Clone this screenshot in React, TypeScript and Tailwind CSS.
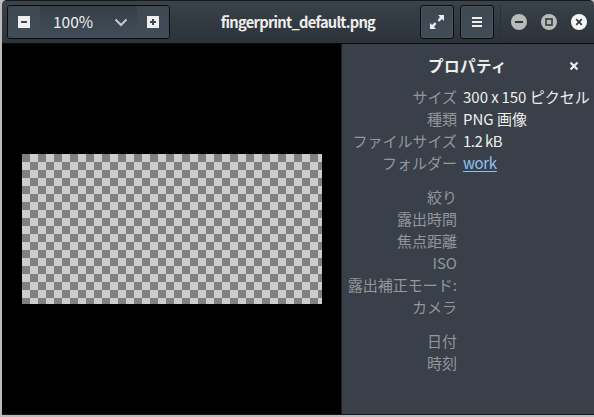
import React from "react";

type Row = { label: string; value?: React.ReactNode; gap?: boolean };

const rows: Row[] = [
  {
    label: "サイズ",
    value: (
      <>
        <span>300 </span>
        <span className="tracking-[-0.4px]">x </span>
        <span>150 ピクセル</span>
      </>
    ),
  },
  {
    label: "種類",
    value: <span>PNG 画像</span>,
  },
  { label: "ファイルサイズ", value: <span className="tracking-[-0.55px]">1.2 kB</span> },
  {
    label: "フォルダー",
    value: (
      <span className="tracking-[-0.35px] text-[#8fc0f4] underline decoration-1 underline-offset-2">
        work
      </span>
    ),
  },
  { label: "絞り", gap: true },
  { label: "露出時間" },
  { label: "焦点距離" },
  { label: "ISO" },
  { label: "露出補正モード:" },
  { label: "カメラ" },
  { label: "日付", gap: true },
  { label: "時刻" },
];

const raised =
  "flex h-[34px] items-center justify-center rounded-[3px] border border-[#0a0c0e] bg-linear-to-b from-[#3e4851] to-[#414c57] inset-shadow-[0_0_0_1px_#48535d]";

function Minus() {
  return (
    <svg width="12" height="12" viewBox="0 0 12 12" shapeRendering="crispEdges">
      <rect width="12" height="12" rx="1" fill="#eeeeec" />
      <rect x="3" y="5" width="6" height="2" fill="#3e4851" />
    </svg>
  );
}

function Plus() {
  return (
    <svg width="12" height="12" viewBox="0 0 12 12" shapeRendering="crispEdges">
      <rect width="12" height="12" rx="1" fill="#eeeeec" />
      <path d="M3 5h2V3h2v2h2v2H7v2H5V7H3z" fill="#3e4851" />
    </svg>
  );
}

function Header() {
  return (
    <header className="flex h-[44px] shrink-0 items-center rounded-tl-[5px] rounded-tr-[5px] border-t border-b border-t-[#15181b] border-b-[#07090a] bg-linear-to-b from-[#3a424a] to-[#2b3238] pl-[5px]">
      <div className="flex h-[34px] w-[163px] shrink-0 overflow-hidden rounded-[3px] border border-[#0a0c0e]">
        <div className="flex w-8 items-center justify-center bg-linear-to-b from-[#3e4851] to-[#414c57]">
          <Minus />
        </div>
        <div className="flex w-[97px] items-center bg-linear-to-b from-[#363f47] to-[#414d58] pl-[13px]">
          <span className="w-[53px] pb-[2px] text-[15.500px] leading-[22px] text-[#eeeeec]">100%</span>
          <svg className="ml-2" width="14" height="9" viewBox="0 0 14 9">
            <path d="M1.500 1.500 7 7l5.500-5.500" fill="none" stroke="#c6c8c9" strokeWidth="2" />
          </svg>
        </div>
        <div className="flex flex-1 items-center justify-center bg-linear-to-b from-[#3e4851] to-[#414c57]">
          <Plus />
        </div>
      </div>
      <h1 className="flex-1 pl-[6px] text-center text-[14.67px] leading-[22px] font-bold tracking-[-0.72px] whitespace-nowrap text-[#eeeeec]">
        fingerprint_default.png
      </h1>
      <div className="flex shrink-0 items-center">
        <div className={`${raised} w-[34px]`}>
          <svg width="14" height="14" viewBox="0 0 14 14" fill="#eeeeec">
            <path d="M8 0h6v6l-2-2-2.800 2.800-1.600-1.600L10 2zM0 8l2 2 2.800-2.800 1.600 1.600L4 12l2 2H0z" />
          </svg>
        </div>
        <div className={`${raised} ml-[6px] w-[34px]`}>
          <svg width="10" height="10" viewBox="0 0 10 10" fill="#eeeeec" shapeRendering="crispEdges">
            <path d="M0 0h10v2H0zM0 4h10v2H0zM0 8h10v2H0z" />
          </svg>
        </div>
        <div className="ml-[6px] h-[34px] w-px bg-[#2a3036]" />
        <div className="ml-[10px] flex gap-[14px] pr-[7px]">
          <svg width="16" height="16" viewBox="0 0 16 16">
            <circle cx="8" cy="8" r="8" fill="#b9bbbb" />
            <path d="M4 7h8v2H4z" fill="#30373e" />
          </svg>
          <svg width="16" height="16" viewBox="0 0 16 16">
            <circle cx="8" cy="8" r="8" fill="#b9bbbb" />
            <rect x="5" y="5" width="6" height="6" fill="none" stroke="#3b4147" strokeWidth="1.700" />
          </svg>
          <svg width="16" height="16" viewBox="0 0 16 16">
            <circle cx="8" cy="8" r="8" fill="#f5f5f5" />
            <path d="m5.200 5.200 5.600 5.600m0-5.600-5.600 5.600" stroke="#30373e" strokeWidth="1.700" />
          </svg>
        </div>
      </div>
    </header>
  );
}

export default function App() {
  return (
    <div className="flex h-[417px] w-[594px] flex-col overflow-hidden bg-[#bdbbbb] pb-[2px] pl-[2px] font-['Noto_Sans_CJK_JP','Noto_Sans',sans-serif]">
      <Header />
      <main className="flex min-h-0 flex-1 border-b border-[#14181b]">
        <section className="w-[340px] shrink-0 border-r border-[#1c2024] bg-black pt-[110px] pl-5">
          <div className="h-[150px] w-[300px] bg-[#cccccc] bg-[conic-gradient(#cccccc_25%,#808080_0_50%,#cccccc_0_75%,#808080_0)] bg-size-[16px_16px]" />
        </section>
        <aside className="min-w-0 flex-1 bg-[#394049]">
          <div className="flex h-[42px] items-center pt-px">
            <h2 className="w-[227px] pl-[86px] text-[15.500px] font-bold tracking-[0.5px] whitespace-nowrap text-[#eeeeec]">
              プロパティ
            </h2>
            <svg width="10" height="10" viewBox="0 0 10 10">
              <path d="m1.500 1.500 7 7m0-7-7 7" stroke="#eeeeec" strokeWidth="2.200" />
            </svg>
          </div>
          <dl className="text-[15px] leading-[22px] whitespace-nowrap">
            {rows.map((r) => (
              <div key={r.label} className={`flex h-[22px] ${r.gap ? "mt-3" : ""}`}>
                <dt className="flex w-[115px] shrink-0 justify-end text-[#92979b]">{r.label}</dt>
                <dd className="ml-[6px] text-[#eeeeec]">{r.value}</dd>
              </div>
            ))}
          </dl>
        </aside>
      </main>
    </div>
  );
}
